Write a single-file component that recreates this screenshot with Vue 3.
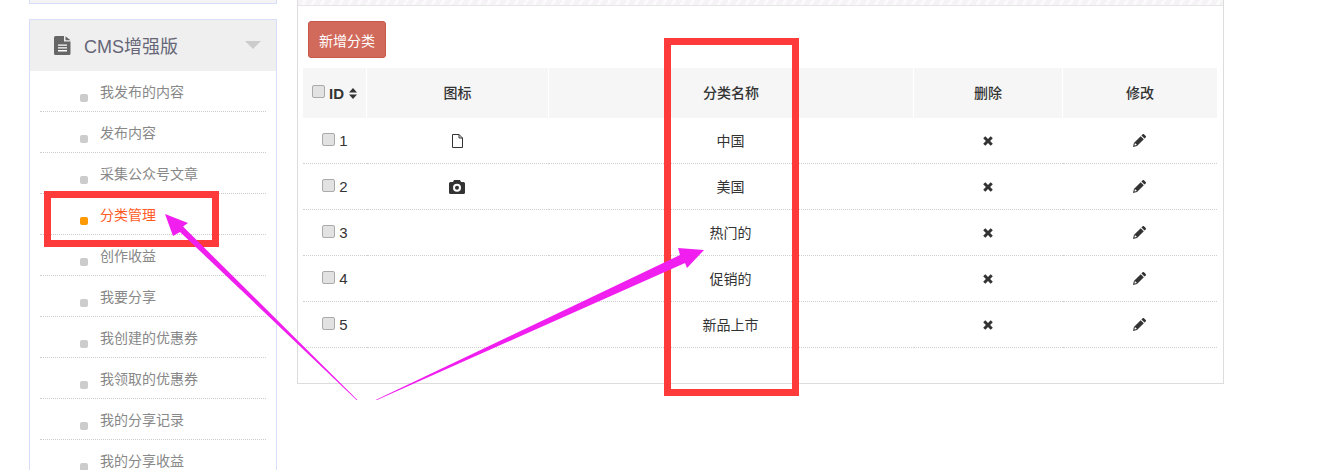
<script setup>
const menu = ['我发布的内容', '发布内容', '采集公众号文章', '分类管理', '创作收益', '我要分享', '我创建的优惠券', '我领取的优惠券', '我的分享记录', '我的分享收益']
const rows = [
  { id: 1, icon: 'file', name: '中国' },
  { id: 2, icon: 'camera', name: '美国' },
  { id: 3, icon: '', name: '热门的' },
  { id: 4, icon: '', name: '促销的' },
  { id: 5, icon: '', name: '新品上市' }
]
</script>

<template>
  <div class="page">
    <aside class="sidebar">
      <div class="stub"></div>
      <div class="box">
        <div class="box-head">
          <svg class="doc-icon" width="17" height="19" viewBox="0 0 17 19">
            <path fill="#666" d="M1.5 0H10v5.5h6.5v12a1.500 1.500 0 0 1-1.500 1.500H1.500A1.500 1.500 0 0 1 0 17.500v-16A1.500 1.500 0 0 1 1.500 0z" />
            <path fill="#666" d="M11.500 0.300L16.500 4.200H11.500z" />
            <path fill="#fff" d="M4 8.500h9v1.300H4zM4 11.300h9v1.300H4zM4 14.100h9v1.300H4z" />
          </svg>
          <span class="box-title">CMS增强版</span>
          <i class="caret"></i>
        </div>
        <ul class="menu">
          <li v-for="item in menu" :key="item" class="menu-item" :class="{ active: item === '分类管理' }">
            <i class="dot"></i>
            <span>{{ item }}</span>
          </li>
        </ul>
      </div>
    </aside>

    <main class="panel">
      <div class="strip"></div>
      <div class="panel-body">
        <button class="add-btn">新增分类</button>
        <table class="grid">
          <colgroup>
            <col style="width: 64px" />
            <col style="width: 182px" />
            <col style="width: 365px" />
            <col style="width: 149px" />
            <col style="width: 154px" />
          </colgroup>
          <thead>
            <tr>
              <th class="id-head">
                <span class="id-cell head-id">
                  <input type="checkbox" class="check" />
                  <b>ID</b>
                  <svg width="8" height="11" viewBox="0 0 8 11">
                    <path fill="#333" d="M4 0l4 4.500H0zM0 6.500h8L4 11z" />
                  </svg>
                </span>
              </th>
              <th>图标</th>
              <th>分类名称</th>
              <th>删除</th>
              <th>修改</th>
            </tr>
          </thead>
          <tbody>
            <tr v-for="row in rows" :key="row.id">
              <td class="id-col">
                <span class="id-cell">
                  <input type="checkbox" class="check" />
                  <span class="num">{{ row.id }}</span>
                </span>
              </td>
              <td>
                <svg v-if="row.icon === 'file'" class="ico" width="13" height="14" viewBox="0 0 13 14">
                  <path fill="none" stroke="#333" stroke-width="1" d="M1.500 0.500h6.500l3.500 3.500v9.500h-10zM8 0.500v3.500h3.500" />
                </svg>
                <svg v-if="row.icon === 'camera'" class="ico" width="16" height="14" viewBox="0 0 16 14">
                  <path fill="#333" fill-rule="evenodd" d="M5 0h6l1 2h2.500A1.500 1.500 0 0 1 16 3.500v9a1.500 1.500 0 0 1-1.500 1.500h-13A1.500 1.500 0 0 1 0 12.500v-9A1.500 1.500 0 0 1 1.500 2H4zM8 3.700a4 4 0 1 0 0 8 4 4 0 0 0 0-8zM8 5.700a2 2 0 1 1 0 4 2 2 0 0 1 0-4z" />
                </svg>
              </td>
              <td class="name-col">{{ row.name }}</td>
              <td>
                <svg class="ico" width="10" height="10" viewBox="0 0 10 10">
                  <path fill="#333" d="M2.300 0.200L5 2.900 7.700 0.200 9.800 2.300 7.100 5 9.800 7.700 7.700 9.800 5 7.100 2.300 9.800 0.200 7.700 2.900 5 0.200 2.300z" />
                </svg>
              </td>
              <td>
                <svg class="ico" width="13" height="13" viewBox="0 0 13 13">
                  <path fill="#333" d="M9.600 0.300a1 1 0 0 1 1.400 0l1.700 1.700a1 1 0 0 1 0 1.400l-1.200 1.200-3.100-3.100zM7.700 2.200l3.100 3.100-6.800 6.800-4 0.900 0.900-4zM1.900 9l-0.500 2.600 2.600-0.500z" />
                </svg>
              </td>
            </tr>
          </tbody>
        </table>
      </div>
    </main>

    <div class="mark mark-menu"></div>
    <div class="mark mark-col"></div>
    <svg class="arrows" width="1323" height="470" viewBox="0 0 1323 470">
      <path fill="#f01ff0" d="M165 214L188 223L183 226.500L357.500 400L356.500 400L180 232L173 236z" />
      <path fill="#f01ff0" d="M704 250L687 268L685 263L377 400L375.500 400L680 255L678 248z" />
    </svg>
  </div>
</template>

<style scoped>
.page {
  position: relative;
  display: flex;
  align-items: flex-start;
  gap: 20px;
  width: 1323px;
  height: 470px;
  padding-left: 29px;
  box-sizing: border-box;
  overflow: hidden;
  background: #fff;
  font-family: "Liberation Sans", "Noto Sans CJK SC", sans-serif;
  font-size: 14px;
  color: #333;
}

.sidebar {
  width: 248px;
  flex: none;
}
.stub {
  height: 3px;
  margin-bottom: 15px;
  background: #f4f4f4;
  border: 1px solid #d6def9;
  border-top: none;
}
.box {
  border: 1px solid #d6def9;
  border-bottom: none;
}
.box-head {
  display: flex;
  align-items: center;
  height: 51px;
  padding-left: 24px;
  background: #efefef;
}
.box-title {
  margin-left: 13px;
  margin-bottom: 2px;
  font-size: 18px;
  color: #667;
}
.caret {
  width: 0;
  height: 0;
  margin-left: auto;
  margin-right: 15px;
  margin-top: -2px;
  border-left: 8px solid transparent;
  border-right: 8px solid transparent;
  border-top: 8px solid #ccc;
}
.menu {
  margin: 0 10px;
  padding: 0;
  list-style: none;
}
.menu-item {
  display: flex;
  align-items: center;
  gap: 12px;
  height: 41px;
  padding-left: 40px;
  box-sizing: border-box;
  border-bottom: 1px dotted #ccc;
  color: #888;
}
.menu-item.active {
  color: #ff5a1f;
}
.dot {
  width: 8px;
  height: 8px;
  margin-top: 13px;
  border-radius: 2px;
  background: #ccc;
}
.active .dot {
  background: #f90;
}

.panel {
  width: 927px;
  flex: none;
  box-sizing: border-box;
  border: 1px solid #ddd;
  border-top: none;
}
.strip {
  height: 5px;
  background: repeating-linear-gradient(120deg, #f5f3f5 0 5px, #fbfbfb 5px 8px);
  border-bottom: 1px solid #e6e6e6;
}
.panel-body {
  padding: 15px 6px 35px 5px;
}
.add-btn {
  display: block;
  width: 78px;
  height: 37px;
  margin: 0 0 10px 5px;
  padding: 0;
  background: #d26a5c;
  border: 1px solid #c9574a;
  border-radius: 3px;
  color: #fff;
  font: inherit;
}

.grid {
  width: 914px;
  table-layout: fixed;
  border-collapse: separate;
  border-spacing: 0;
}
.grid th {
  height: 50px;
  padding: 0 0 2px;
  box-sizing: border-box;
  background: #f6f6f6;
  border-right: 1px solid #fff;
  font-weight: 500;
  color: #333;
}
.grid th.id-head {
  padding: 0;
}
.grid th:last-child {
  border-right: none;
}
.grid td {
  height: 46px;
  padding: 0 2px 0 0;
  box-sizing: border-box;
  text-align: center;
  border-bottom: 1px dotted #d0d0d0;
}
.grid td.id-col {
  padding: 0;
}
.grid td.name-col {
  padding-bottom: 2px;
}
.id-cell {
  display: inline-flex;
  align-items: center;
  gap: 4px;
}
.num {
  font-size: 15px;
}
.head-id b {
  margin-right: 1px;
  font-size: 15px;
  font-weight: 700;
}
.check {
  appearance: none;
  width: 13px;
  height: 13px;
  margin: -3px 0 0;
  box-sizing: border-box;
  background: #e2e2e2;
  border: 1px solid #aaa;
  border-radius: 2px;
}
.ico {
  display: block;
  margin: 0 auto;
}

.mark {
  position: absolute;
  box-sizing: border-box;
  border: 7px solid #ff3a3a;
}
.mark-menu {
  left: 44px;
  top: 191px;
  width: 175px;
  height: 56px;
}
.mark-col {
  left: 664px;
  top: 38px;
  width: 135px;
  height: 358px;
}
.arrows {
  position: absolute;
  left: 0;
  top: 0;
  pointer-events: none;
}
</style>
